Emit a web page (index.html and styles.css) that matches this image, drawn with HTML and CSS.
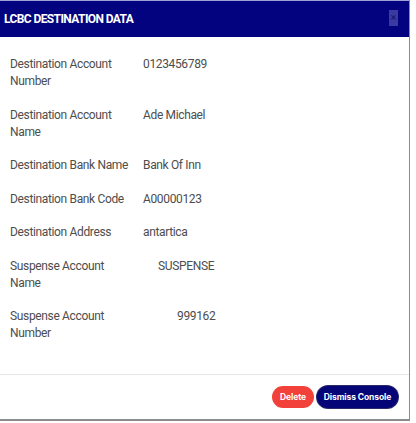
FILE: index.html
```html
<!DOCTYPE html>
<html>
<head>
<meta charset="utf-8">
<link rel="stylesheet" href="styles.css">
</head>
<body>
<div class="modal">
  <div class="header">
    <span class="title">LCBC DESTINATION DATA</span>
    <span class="close">×</span>
  </div>
  <div class="body">
    <div class="grid">
      <div class="label">Destination Account Number</div><div class="value">0123456789</div>
      <div class="label">Destination Account Name</div><div class="value">Ade Michael</div>
      <div class="label">Destination Bank Name</div><div class="value">Bank Of Inn</div>
      <div class="label">Destination Bank Code</div><div class="value">A00000123</div>
      <div class="label">Destination Address</div><div class="value">antartica</div>
      <div class="label">Suspense Account Name</div><div class="value shift-a">SUSPENSE</div>
      <div class="label">Suspense Account Number</div><div class="value shift-b">999162</div>
    </div>
  </div>
  <div class="footer">
    <button class="btn btn-delete">Delete</button>
    <button class="btn btn-dismiss">Dismiss Console</button>
  </div>
</div>
</body>
</html>
```
FILE: styles.css
```css
html, body {
  margin: 0;
  padding: 0;
  background: #ffffff;
}
.modal {
  width: 409px;
  height: 419px;
  border-right: 1px solid #8c8c8c;
  border-bottom: 2px solid #8c8c8c;
  display: flex;
  flex-direction: column;
  font-family: Roboto, "Liberation Sans", sans-serif;
}
.header {
  border-top: 1px solid #a0a0d8;
  background: #03037f;
  display: flex;
  align-items: center;
  justify-content: space-between;
  padding: 0 11px 0 4px;
  box-sizing: border-box;
  height: 37px;
}
.title {
  color: #ffffff;
  font-weight: bold;
  font-size: 12px;
  letter-spacing: -0.6px;
}
.close {
  width: 9px;
  height: 16px;
  background: #3a3aa0;
  color: #15156a;
  font-size: 11px;
  line-height: 16px;
  text-align: center;
  margin-top: -2px;
}
.body {
  flex: 1;
  padding: 19px 10px 0 10px;
}
.grid {
  display: grid;
  grid-template-columns: 122px 1fr;
  column-gap: 11px;
  row-gap: 16.5px;
  font-size: 12px;
  line-height: 17px;
  letter-spacing: -0.35px;
  color: #4d4d4d;
}
.shift-a { padding-left: 15px; }
.shift-b { padding-left: 34px; }
.footer {
  border-top: 1px solid #e6e6e6;
  display: flex;
  justify-content: flex-end;
  gap: 3px;
  padding: 11px 11px 11px 0;
}
.btn {
  height: 22px;
  border: none;
  border-radius: 11px;
  color: #ffffff;
  font-family: Inter, "Liberation Sans", sans-serif;
  font-weight: bold;
  font-size: 8.5px;
  letter-spacing: -0.1px;
  padding: 0;
}
.btn-delete {
  background: #f2403a;
  width: 42px;
}
.btn-dismiss {
  background: #050578;
  width: 81px;
  box-shadow: 0 0 0 1px #2a2a6a;
}
```
